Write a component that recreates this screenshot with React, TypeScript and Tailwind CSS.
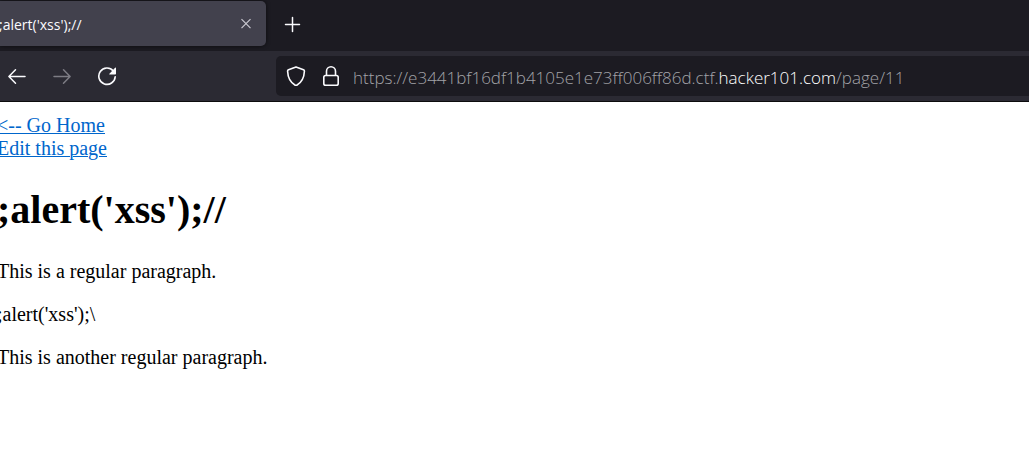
import { useState } from "react";

const ADDRESS = "https://e3441bf16df1b4105e1e73ff006ff86d.ctf.hacker101.com/page/11";
const DOMAIN = "hacker101.com";

function TabStrip() {
  return (
    <div className="flex h-[51px] items-start bg-[#1c1b22] pt-px">
      <div className="flex h-[45px] w-[266px] items-center justify-between rounded-r-[5px] bg-[#42414d] pr-3 shadow-[0_0_4px_rgba(0,0,0,0.6)]">
        <span className="-ml-px pt-0.5 text-[14px] leading-5 text-[#fbfbfe]">;alert('xss');//</span>
        <button type="button" aria-label="Close tab" className="flex h-4 w-4 items-center justify-center">
          <svg width="16" height="16" viewBox="0 0 16 16" fill="none" stroke="#c9c8d0" strokeWidth="1.2">
            <path d="M3.5 3.2l9 9M12.5 3.2l-9 9" />
          </svg>
        </button>
      </div>
      <button type="button" aria-label="New tab" className="ml-4 flex h-[45px] w-5 items-center justify-center">
        <svg width="20" height="20" viewBox="0 0 20 20" fill="none" stroke="#fbfbfe" strokeWidth="1.5" strokeLinecap="round">
          <path d="M10.5 3.5v14M3.5 10.5h14" />
        </svg>
      </button>
    </div>
  );
}

function AddressBar() {
  const [url, setUrl] = useState(ADDRESS);
  const at = url.indexOf(DOMAIN);
  const end = at < 0 ? 0 : at + DOMAIN.length;
  return (
    <div className="flex h-10 min-w-0 flex-1 items-center rounded-l-[5px] bg-[#1c1b22] pl-[10px]">
      <button type="button" aria-label="Tracking protection" className="h-5 w-5 shrink-0">
        <svg width="20" height="20" viewBox="0 0 20 20" fill="none" stroke="#fbfbfe" strokeWidth="1.6" strokeLinejoin="round">
          <path d="M10 .9L17.5 3.7Q18.5 4.1 18.4 5.2C18.1 12.2 15.8 16.3 10.8 19.2Q10 19.6 9.2 19.2C4.2 16.3 1.9 12.2 1.6 5.2Q1.5 4.1 2.5 3.7Z" />
        </svg>
      </button>
      <button type="button" aria-label="Site security" className="ml-[15px] h-5 w-5 shrink-0">
        <svg width="20" height="20" viewBox="0 0 20 20" fill="none" stroke="#fbfbfe" strokeWidth="1.6">
          <rect x="2.8" y="9.5" width="14.4" height="9.7" rx="1.8" />
          <path d="M5.5 9.5V5.3a4.5 4.5 0 0 1 9 0v4.2" />
        </svg>
      </button>
      <div className="ml-3 grid min-w-0 flex-1 items-center pt-[3px] text-[17px] font-light leading-6">
        <input
          type="text"
          aria-label="Address"
          value={url}
          onChange={(e) => setUrl(e.target.value)}
          spellCheck={false}
          className="col-start-1 row-start-1 w-full bg-transparent text-transparent caret-white outline-none"
        />
        <div aria-hidden="true" className="pointer-events-none col-start-1 row-start-1 overflow-hidden whitespace-pre text-[#a3a3a8]">
          {url.slice(0, Math.max(at, 0))}
          <span className="text-white">{url.slice(Math.max(at, 0), end)}</span>
          {url.slice(end)}
        </div>
      </div>
    </div>
  );
}

function Toolbar() {
  return (
    <div className="flex h-[51px] items-center border-b border-[#0c0c0d] bg-[#2b2a33]">
      <button type="button" aria-label="Back" className="ml-[7px] h-5 w-5 shrink-0">
        <svg width="20" height="20" viewBox="0 0 20 20" fill="none" stroke="#fbfbfe" strokeWidth="1.5" strokeLinecap="round" strokeLinejoin="round">
          <path d="M18 10.5H2M8.5 3.8L1.9 10.5l6.6 6.7" />
        </svg>
      </button>
      <button type="button" aria-label="Forward" disabled className="ml-[25px] h-5 w-5 shrink-0">
        <svg width="20" height="20" viewBox="0 0 20 20" fill="none" stroke="#7d7c84" strokeWidth="1.5" strokeLinecap="round" strokeLinejoin="round">
          <path d="M2 10.5h16M11.5 3.8l6.6 6.7-6.6 6.7" />
        </svg>
      </button>
      <button type="button" aria-label="Reload" className="ml-[25px] h-5 w-5 shrink-0">
        <svg width="20" height="20" viewBox="0 0 20 20" fill="none">
          <path d="M16.3 4.9A8.2 8.2 0 1 0 18.2 10.7" stroke="#fbfbfe" strokeWidth="1.6" strokeLinecap="round" />
          <path d="M19 2v5.700q0 .7-.7.700h-5.700q-.8 0-.2-.7l5.700-5.900q.9-.8.9.2z" fill="#fbfbfe" />
        </svg>
      </button>
      <div className="flex min-w-0 flex-1 pl-[159px]">
        <AddressBar />
      </div>
    </div>
  );
}

export default function App() {
  return (
    <div className="min-h-screen overflow-hidden bg-white">
      <header className="font-['Open_Sans',sans-serif]">
        <TabStrip />
        <Toolbar />
      </header>
      <main className="-ml-[3px] pt-3 font-['Liberation_Serif',serif] text-[20px] leading-[23px] text-black">
        <nav className="flex flex-col items-start text-[#0066cc] underline decoration-1">
          <a href="/">&lt;-- Go Home</a>
          <a href="/page/edit/11">Edit this page</a>
        </nav>
        <h1 className="mt-[27px] text-[40px] font-bold leading-[45px]">;alert('xss');//</h1>
        <div className="mt-7 flex flex-col gap-5">
          <p>This is a regular paragraph.</p>
          <p>;alert('xss');\</p>
          <p>This is another regular paragraph.</p>
        </div>
      </main>
    </div>
  );
}
